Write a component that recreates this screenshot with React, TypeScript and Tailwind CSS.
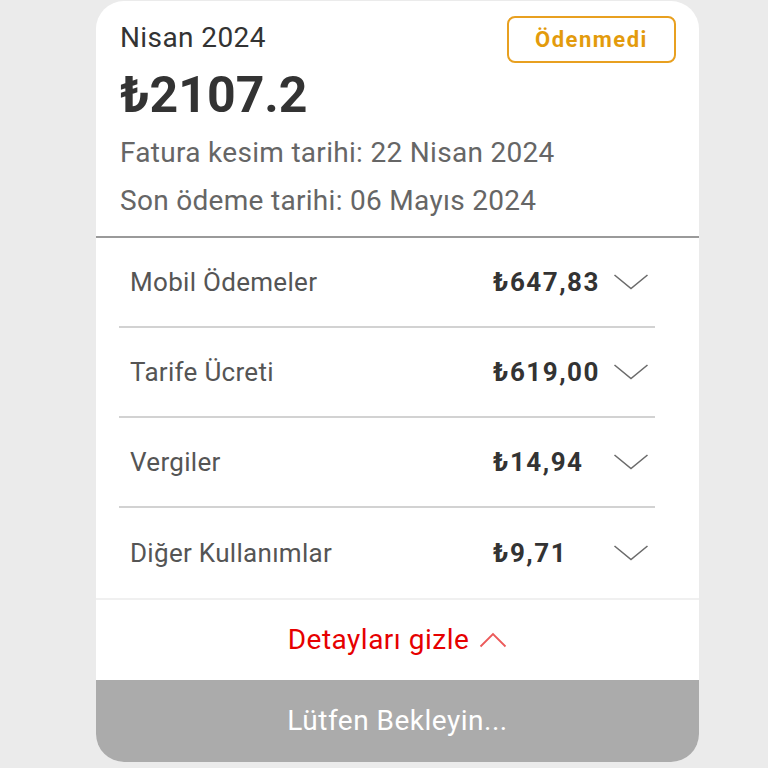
import React from "react";

const rows = [
  { label: "Mobil Ödemeler", amount: "₺647,83" },
  { label: "Tarife Ücreti", amount: "₺619,00" },
  { label: "Vergiler", amount: "₺14,94" },
  { label: "Diğer Kullanımlar", amount: "₺9,71" },
];

function ChevronDown() {
  return (
    <svg width="36" height="18" viewBox="0 0 36 18" fill="none">
      <polyline points="1.5,2 18,15.5 34.5,2" stroke="#6b6b6b" strokeWidth="1.6" />
    </svg>
  );
}

function ChevronUp() {
  return (
    <svg width="28" height="16" viewBox="0 0 28 16" fill="none">
      <polyline points="1.5,14.5 14,2 26.5,14.5" stroke="#ec5a5a" strokeWidth="1.8" />
    </svg>
  );
}

export default function App() {
  return (
    <div
      className="flex h-[768px] w-[768px] bg-[#ebebeb] pt-px pl-[96px]"
      style={{ fontFamily: "Roboto, 'Noto Sans', sans-serif" }}
    >
      <div className="flex h-[761px] w-[603px] flex-col overflow-hidden rounded-[28px] bg-white">
        {/* header */}
        <div className="px-[24px] pt-[15px] pb-[11px]">
          <div className="flex items-start justify-between">
            <div className="mt-[4px] text-[28px] leading-[36px] tracking-[0.4px] text-[#333]">
              Nisan 2024
            </div>
            <div className="mr-[-1px] flex h-[47px] w-[169px] items-center justify-center rounded-[8px] border-2 border-[#e8a020] text-[22px] font-bold tracking-[1.5px] text-[#e39b0c]">
              Ödenmedi
            </div>
          </div>
          <div className="mt-[6px] text-[50px] leading-[52px] font-bold tracking-[0px] text-[#333]">
            ₺2107.2
          </div>
          <div className="mt-[8px] text-[28px] leading-[48px] tracking-[0.3px] text-[#666]">
            Fatura kesim tarihi: 22 Nisan 2024
          </div>
          <div className="text-[28px] leading-[48px] tracking-[0.3px] text-[#666]">
            Son ödeme tarihi: 06 Mayıs 2024
          </div>
        </div>
        <div className="h-[2px] bg-[#9a9a9a]" />

        {/* rows */}
        <div className="border-b-2 border-[#f0f0f0] pr-[44px] pl-[23px]">
          {rows.map((r, i) => (
            <div
              key={r.label}
              className={`flex h-[90px] items-center pl-[11px] ${
                i < rows.length - 1 ? "border-b-2 border-[#d2d2d2]" : ""
              }`}
            >
              <span className="flex-1 text-[26px] tracking-[0.3px] text-[#555]">{r.label}</span>
              <span className="w-[120px] text-[26px] font-bold tracking-[1.5px] text-[#333]">
                {r.amount}
              </span>
              <span className="flex w-[42px] justify-start">
                <ChevronDown />
              </span>
            </div>
          ))}
        </div>

        {/* toggle */}
        <div className="flex h-[80px] items-center justify-center gap-[10px]">
          <span className="text-[28px] tracking-[0.5px] text-[#e60000]">Detayları gizle</span>
          <ChevronUp />
        </div>

        {/* button */}
        <div className="flex flex-1 items-center justify-center bg-[#ababab]">
          <span className="text-[28px] tracking-[0.5px] text-white">Lütfen Bekleyin...</span>
        </div>
      </div>
    </div>
  );
}
